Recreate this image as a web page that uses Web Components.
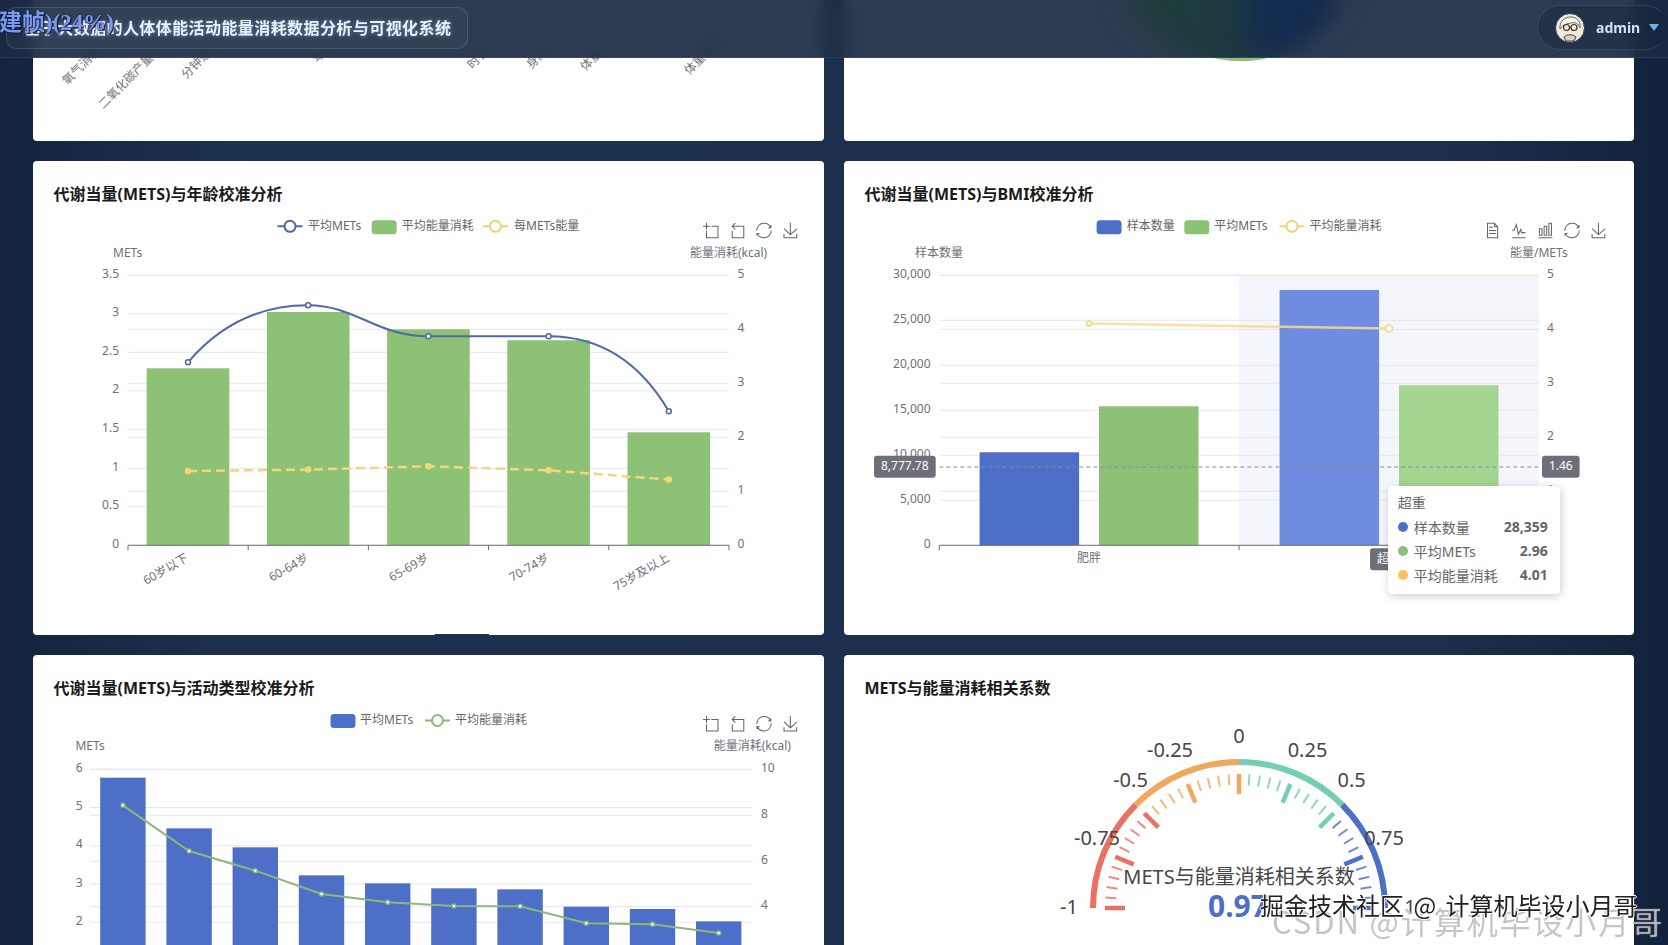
<!DOCTYPE html>
<html lang="zh-CN">
<head>
<meta charset="utf-8">
<title>人体体能活动能量消耗数据分析与可视化系统</title>
<style>
  html, body { margin: 0; height: 100%; overflow: hidden; }
  body {
    background: linear-gradient(90deg, #13243c 0, #1c3050 14%, #1c2f4c 86%, #12223a 100%);
    font-family: "Noto Sans", "Noto Sans CJK SC", sans-serif;
  }
</style>
</head>
<body>
<dash-header></dash-header>
<dash-grid>
  <chart-card><top-bars-chart></top-bars-chart></chart-card>
  <chart-card><top-pie-chart></top-pie-chart></chart-card>
  <chart-card heading="代谢当量(METS)与年龄校准分析"><age-chart></age-chart></chart-card>
  <chart-card heading="代谢当量(METS)与BMI校准分析">
    <bmi-chart></bmi-chart>
    <chart-tooltip heading="超重" style="left:543.7px;top:325px">
      <tip-row color="#4d6fc7" name="样本数量" value="28,359"></tip-row>
      <tip-row color="#8fbf78" name="平均METs" value="2.96"></tip-row>
      <tip-row color="#fcc35c" name="平均能量消耗" value="4.01"></tip-row>
    </chart-tooltip>
  </chart-card>
  <chart-card heading="代谢当量(METS)与活动类型校准分析"><activity-chart></activity-chart></chart-card>
  <chart-card heading="METS与能量消耗相关系数"><gauge-chart></gauge-chart></chart-card>
</dash-grid>
<overlay-text class="progress">建帧)(24%)</overlay-text>
<overlay-text class="csdn">CSDN @计算机毕设小月哥</overlay-text>
<overlay-text class="juejin">掘金技术社区 @ 计算机毕设小月哥</overlay-text>

<script>
const FONT = `"Noto Sans", "Noto Sans CJK SC", sans-serif`;
const BLUE = "#4d6fc7", GREEN = "#8cc176", AXIS = "#6e7079", GRID = "#e3e7ef";

// echarts toolbox glyphs, 60x60 box
const ICONS = {
  zoom: "M0,13.5h26.9 M13.5,26.9V0 M32.1,13.5H58V58H13.5 V32.1",
  back: "M22,1.4L9.9,13.5l12.3,12.3 M10.3,13.5H54.9v44.6 H10.3v-26",
  restore: "M47,18.9h9.8V8.7 M56.3,20.1 C52.1,9,40.5,0.6,26.8,2.1C12.6,3.7,1.6,16.2,2.1,30.6 M13,41.1H3.1v10.2 M3.7,39.9c4.2,11.1,15.8,19.5,29.5,18 c14.2-1.6,25.2-14.1,24.7-28.5",
  save: "M4.7,22.9L29.3,45.5L54.7,23.4M4.6,43.6L4.6,58L53.8,58L53.8,43.6M29.2,45.1L29.2,0",
  data: "M17.5,17.3H33 M45.4,29.5h-28 M11.5,2v56H51V14.8L38.4,2H11.5z M38.4,2.2v12.7H51 M45.4,41.7h-28",
  line: "M4.1,28.9h7.1l9.3-22l7.4,38l9.7-19.7l3,12.8h14.9M4.1,58h51.4",
  bar: "M6.7,22.9h10V48h-10V22.9zM24.9,13h10v35h-10V13zM43.2,2h10v46h-10V2zM3.1,58h53.7"
};

const text = (x, y, s, o = {}) =>
  `<text x="${x}" y="${y}" dominant-baseline="central" text-anchor="${o.a || "start"}" font-size="${o.size || 12}" fill="${o.fill || AXIS}" font-weight="${o.w || 400}"${o.t ? ` transform="${o.t}"` : ""}>${s}</text>`;

const toolbox = (names, x, y) => names.map((n, i) =>
  `<svg x="${x + i * 26.6}" y="${y}" width="15.5" height="15.5" viewBox="0 0 60 60" overflow="visible"><path d="${ICONS[n]}" fill="none" stroke="#666" stroke-width="4"/></svg>`).join("");

const legRect = (x, y, color) => `<rect x="${x}" y="${y - 7}" width="25" height="14" rx="3.5" fill="${color}"/>`;
const legLine = (x, y, color) =>
  `<path d="M${x} ${y}h25" stroke="${color}" stroke-width="2"/><circle cx="${x + 12.5}" cy="${y}" r="5.5" fill="#fff" stroke="${color}" stroke-width="2"/>`;

const hgrid = (ys, x1, x2) => ys.map(y => `<path d="M${x1} ${y}H${x2}" stroke="${GRID}" stroke-width="1"/>`).join("");
const dot = (x, y, c, r = 2.5, fill = "#fff") => `<circle cx="${x}" cy="${y}" r="${r}" fill="${fill}" stroke="${c}" stroke-width="1.5"/>`;

class ChartBase extends HTMLElement {
  static box = [0, 0, 790, 430];
  connectedCallback() {
    const [x, y, w, h] = this.constructor.box;
    this.attachShadow({ mode: "open" }).innerHTML = `
      <style>
        :host { display: block; height: ${h}px; }
        .plot { display: block; width: ${w}px; height: ${h}px; }
        text { font-family: ${FONT}; }
      </style>
      <svg class="plot" viewBox="${x} ${y} ${w} ${h}" xmlns="http://www.w3.org/2000/svg">${this.draw()}</svg>`;
  }
}

class AgeChart extends ChartBase {
  static box = [33, 203.7, 791, 431];
  draw() {
    const L = 128, R = 729, B = 545;
    const cx = [188, 308.2, 428.4, 548.6, 668.8];
    const tops = [368, 311.7, 329, 340, 432];
    const left = [[3.5, 275], [3, 313.6], [2.5, 352], [2, 390.6], [1.5, 429], [1, 468], [0.5, 506.5], [0, 545]];
    const right = [[5, 275], [4, 329], [3, 383], [2, 437], [1, 491], [0, 545]];
    const cats = ["60岁以下", "60-64岁", "65-69岁", "70-74岁", "75岁及以上"];
    const yellow = [470.7, 469.3, 466, 470, 479.3];
    const mets = [362, 305, 336, 336, 411];
    return `
      ${legLine(277.5, 226, "#4f6aa6")}${text(308, 225, "平均METs", { fill: "#666" })}
      ${legRect(371.7, 227, GREEN)}${text(401.7, 225, "平均能量消耗", { fill: "#666" })}
      ${legLine(483, 226, "#f0d27a")}${text(514, 225, "每METs能量", { fill: "#666" })}
      ${toolbox(["zoom", "back", "restore", "save"], 703, 222.5)}
      ${text(113, 252, "METs")}${text(690, 252, "能量消耗(kcal)")}
      ${hgrid(left.map(a => a[1]).concat(right.map(a => a[1])), L, R)}
      ${left.map(a => text(119, a[1] - 2, a[0], { a: "end" })).join("")}
      ${right.map(a => text(737.5, a[1] - 2, a[0])).join("")}
      ${cx.map((c, i) => `<rect x="${c - 41.3}" y="${tops[i]}" width="82.6" height="${B - tops[i]}" fill="${GREEN}"/>`).join("")}
      <path d="M${L} ${B}H${R}" stroke="${AXIS}"/>
      ${[0, 1, 2, 3, 4, 5].map(i => `<path d="M${L + i * 120.2} ${B}v5" stroke="${AXIS}"/>`).join("")}
      ${cx.map((c, i) => text(c - 1, 556, cats[i], { a: "end", t: `rotate(-30 ${c - 1} 556)` })).join("")}
      <path d="M188 362C222 322 262 305 308.2 305C356 305 376 336 428.4 336L548.6 336C600 336 640 362 668.8 411" fill="none" stroke="#4f6aa6" stroke-width="2"/>
      ${cx.map((c, i) => dot(c, mets[i], "#4f6aa6")).join("")}
      <polyline points="${cx.map((c, i) => c + "," + yellow[i]).join(" ")}" fill="none" stroke="#f3d67f" stroke-width="2.5" stroke-dasharray="9 5"/>
      ${cx.map((c, i) => dot(c, yellow[i], "#f7d67a", 2.5, "#fbd46a")).join("")}
      <rect x="434.6" y="633.7" width="54.4" height="1" fill="#22324a"/>`;
  }
}

class BmiChart extends ChartBase {
  static box = [844, 203.7, 790, 431];
  draw() {
    const L = 939.3, R = 1538.8, B = 545;
    const left = [["30,000", 275], ["25,000", 320], ["20,000", 365], ["15,000", 410], ["10,000", 455], ["5,000", 500], ["0", 545]];
    const right = [[5, 275], [4, 329], [3, 383], [2, 437], [1, 491]];
    const pill = (x, y, w, s, c) => `<rect x="${x}" y="${y}" width="${w}" height="22" rx="3" fill="${AXIS}"/>` + text(c, y + 10, s, { a: "middle", fill: "#fff" });
    const bar = (x, top, c) => `<rect x="${x}" y="${top}" width="99.5" height="${B - top}" fill="${c}"/>`;
    return `
      ${legRect(1096.6, 227, BLUE)}${text(1126.7, 225, "样本数量", { fill: "#666" })}
      ${legRect(1184.3, 227, GREEN)}${text(1214.3, 225, "平均METs", { fill: "#666" })}
      ${legLine(1279.5, 226, "#f0d27a")}${text(1309.4, 225, "平均能量消耗", { fill: "#666" })}
      ${toolbox(["data", "line", "bar", "restore", "save"], 1484.5, 222.5)}
      ${text(915, 252, "样本数量")}${text(1510, 252, "能量/METs")}
      <rect x="1239" y="275" width="${R - 1239}" height="270" fill="#f4f6fb"/>
      ${hgrid(left.map(a => a[1]).concat(right.map(a => a[1])), L, R)}
      ${left.map(a => text(930.6, a[1] - 2, a[0], { a: "end" })).join("")}
      ${right.map(a => text(1547, a[1] - 2, a[0])).join("")}
      ${bar(979.6, 452, BLUE)}${bar(1099, 406, GREEN)}${bar(1279.6, 289.7, "#6e8de0")}${bar(1399, 385, "#a3d590")}
      <path d="M${L} ${B}H${R}" stroke="${AXIS}"/>
      ${[0, 1, 2].map(i => `<path d="M${L + i * 299.75} ${B}v5" stroke="${AXIS}"/>`).join("")}
      ${text(1089, 557, "肥胖", { a: "middle" })}
      ${pill(1370, 548, 38, "超重", 1389)}
      <path d="M1089 323.3L1389 328.3" stroke="#f7dc8e" stroke-width="2.5" opacity=".85"/>
      ${dot(1089, 323.3, "#f3d67f", 2.5)}${dot(1389, 328.3, "#f3d67f", 3.5)}
      <path d="M${L} 466.7H${R}" stroke="#8a8c94" stroke-dasharray="4 3"/>
      ${pill(874, 455.5, 61.7, "8,777.78", 904.8)}
      ${pill(1542, 455.5, 37.6, "1.46", 1560.8)}`;
  }
}

class ActivityChart extends ChartBase {
  static box = [33, 698, 791, 431];
  draw() {
    const L = 90, R = 752, B = 1000;
    const cx = Array.from({ length: 10 }, (_, i) => 122.9 + i * 66.2);
    const tops = [383, 535, 592, 676, 700, 715, 718, 770, 777, 814].map(p => 650 + p / 3);
    const line = [466, 603, 662, 732, 757, 768, 769, 820, 823, 849].map(p => 650 + p / 3);
    const left = [[6, 769.3], [5, 807.5], [4, 845.8], [3, 884], [2, 922.3]];
    const right = [[10, 769.3], [8, 815.3], [6, 861.3], [4, 906.7]];
    return `
      ${legRect(330.5, 721, BLUE)}${text(360, 719.5, "平均METs", { fill: "#666" })}
      ${legLine(425, 720.5, "#8db87a")}${text(455, 719.5, "平均能量消耗", { fill: "#666" })}
      ${toolbox(["zoom", "back", "restore", "save"], 703, 716)}
      ${text(75.4, 745.7, "METs")}${text(713.7, 745.7, "能量消耗(kcal)")}
      ${hgrid(left.map(a => a[1]).concat(right.map(a => a[1])), L, R)}
      ${left.map(a => text(82.5, a[1] - 2, a[0], { a: "end" })).join("")}
      ${right.map(a => text(761, a[1] - 2, a[0])).join("")}
      ${cx.map((c, i) => `<rect x="${c - 22.7}" y="${tops[i]}" width="45.4" height="${B - tops[i]}" fill="${BLUE}"/>`).join("")}
      <polyline points="${cx.map((c, i) => c + "," + line[i]).join(" ")}" fill="none" stroke="#8db87a" stroke-width="2"/>
      ${cx.map((c, i) => dot(c, line[i], "#8db87a", 2)).join("")}`;
  }
}

class GaugeChart extends ChartBase {
  static box = [844, 698, 790, 431];
  draw() {
    const cx = 1239, cy = 908, R = 146;
    const pt = (deg, r) => [cx + r * Math.cos(deg * Math.PI / 180), cy - r * Math.sin(deg * Math.PI / 180)];
    const colors = ["#ec6f63", "#efa95f", "#75cdb3", BLUE];
    const arcs = colors.map((c, i) => {
      const [x1, y1] = pt(180 - i * 45, R), [x2, y2] = pt(135 - i * 45, R);
      return `<path d="M${x1} ${y1}A${R} ${R} 0 0 1 ${x2} ${y2}" fill="none" stroke="${c}" stroke-width="6"/>`;
    }).join("");
    let ticks = "";
    for (let i = 0; i <= 40; i++) {
      const major = i % 5 === 0, deg = 180 - i * 4.5;
      const c = colors[Math.min(3, Math.floor((i - (major && i % 10 === 0 && i ? 1 : 0)) / 10))];
      const [x1, y1] = pt(deg, 134), [x2, y2] = pt(deg, major ? 114 : 123);
      ticks += `<path d="M${x1} ${y1}L${x2} ${y2}" stroke="${c}" stroke-width="${major ? 4.5 : 2}" opacity="${major ? 1 : .8}"/>`;
    }
    const labels = [[1069, 906, "-1"], [1097, 837, "-0.75"], [1130.5, 779, "-0.5"], [1170, 749.7, "-0.25"], [1239, 735.7, "0"],
      [1307.5, 749.7, "0.25"], [1351.6, 779, "0.5"], [1384, 837, "0.75"], [1410, 906, "1"]];
    return `
      ${arcs}${ticks}
      ${labels.map(l => text(l[0], l[1], l[2], { a: "middle", size: 20, fill: "#464646" })).join("")}
      ${text(1239, 876.5, "METS与能量消耗相关系数", { a: "middle", size: 20, fill: "#464646" })}
      ${text(1238, 905, "0.97", { a: "middle", size: 30, w: 700, fill: BLUE })}`;
  }
}

// first row: only the bottom of these two charts is left below the header
class TopBarsChart extends ChartBase {
  static box = [33, -290.3, 791, 431];
  draw() {
    const labels = [[64, 82, "氧气消耗量"], [100, 106, "二氧化碳产量"], [183, 76, "分钟通气量"], [314, 60, "年龄"],
      [469, 66, "时长"], [528, 66, "身高"], [582, 68, "体重"], [686, 72, "体重指数"]];
    return labels.map(l => text(l[0], l[1], l[2], { t: `rotate(-45 ${l[0]} ${l[1]})`, fill: "#777" })).join("");
  }
}

class TopPieChart extends ChartBase {
  static box = [844, -290.3, 790, 431];
  draw() {
    return `<circle cx="1241" cy="-49" r="110" fill="${GREEN}"/>`;
  }
}

class ChartCard extends HTMLElement {
  connectedCallback() {
    const heading = this.getAttribute("heading") || "";
    this.attachShadow({ mode: "open" }).innerHTML = `
      <style>
        :host { display: block; position: relative; height: 474px; background: #fff; border-radius: 4px; overflow: hidden; }
        h3 { margin: 0; height: 43px; padding: 23px 0 0 20.5px; box-sizing: border-box; font: 700 16px/20px ${FONT}; color: #1a1a1a; }
      </style>
      <h3>${heading}</h3>
      <slot></slot>`;
  }
}

class TipRow extends HTMLElement {
  connectedCallback() {
    this.attachShadow({ mode: "open" }).innerHTML = `
      <style>
        :host { display: flex; align-items: center; height: 24px; font: 14px ${FONT}; color: #666; }
        i { width: 10px; height: 10px; border-radius: 50%; margin-right: 6px; background: ${this.getAttribute("color")}; }
        b { margin-left: auto; font-weight: 700; }
      </style>
      <i></i><span>${this.getAttribute("name")}</span><b>${this.getAttribute("value")}</b>`;
  }
}

class ChartTooltip extends HTMLElement {
  connectedCallback() {
    this.attachShadow({ mode: "open" }).innerHTML = `
      <style>
        :host { position: absolute; box-sizing: border-box; width: 172px; height: 108px; padding: 6px 12px 0 10px;
          background: #fff; border-radius: 4px; box-shadow: 1px 2px 10px rgba(0,0,0,.2); }
        div { font: 14px/22px ${FONT}; color: #666; margin-bottom: 1px; }
      </style>
      <div>${this.getAttribute("heading")}</div>
      <slot></slot>`;
  }
}

class DashGrid extends HTMLElement {
  connectedCallback() {
    this.attachShadow({ mode: "open" }).innerHTML = `
      <style>
        :host { display: grid; grid-template-columns: 791px 790px; gap: 20px; padding-left: 33px; margin-top: -333.3px; }
      </style>
      <slot></slot>`;
  }
}

class UserChip extends HTMLElement {
  connectedCallback() {
    this.attachShadow({ mode: "open" }).innerHTML = `
      <style>
        :host { display: flex; align-items: center; box-sizing: border-box; width: 131px; height: 45px; margin-top: 5px;
          padding-left: 17px; border: 1px solid rgba(120,150,190,.22); border-right-color: transparent; border-radius: 23px;
          background: rgba(20,34,56,.35); font: 700 14px ${FONT}; color: #cfe1f5; }
        svg { width: 30px; height: 30px; flex: none; }
        span { margin-left: 11px; }
        i { width: 0; height: 0; margin-left: 9px; border: 5px solid transparent; border-top: 7px solid #6db1f0; border-bottom: 0; }
      </style>
      <svg viewBox="0 0 30 30">
        <circle cx="15" cy="15" r="14.5" fill="#efe9dc" stroke="#22344f" stroke-width="1"/>
        <path d="M5 16C4 8 10 4 16 4C22 4 26 9 25 15C23 10 20 9 16 10C12 11 8 11 5 16Z" fill="#f7f4ec" stroke="#6b6a66" stroke-width="1"/>
        <circle cx="11.5" cy="14.5" r="3" fill="none" stroke="#333" stroke-width="1.2"/>
        <circle cx="19" cy="14.5" r="3" fill="none" stroke="#333" stroke-width="1.2"/>
        <path d="M14.5 14.5h1.5M9 24c3-3 9-3 12 0l-2 4h-8z" stroke="#444" stroke-width="1" fill="#d8d2c2"/>
      </svg>
      <span>admin</span><i></i>`;
  }
}

class DashHeader extends HTMLElement {
  connectedCallback() {
    this.attachShadow({ mode: "open" }).innerHTML = `
      <style>
        :host { position: fixed; z-index: 5; top: 0; left: 0; right: 0; height: 58px; box-sizing: border-box; overflow: hidden;
          display: flex; justify-content: space-between; align-items: flex-start; padding-left: 6.4px;
          background: rgba(26,42,66,.92); backdrop-filter: blur(10px); border-bottom: 1px solid rgba(255,255,255,.08); }
        .blob { position: absolute; left: 1125px; top: -110px; width: 216px; height: 170px; border-radius: 50%; filter: blur(14px);
          background: linear-gradient(90deg, #1f3d3a 0, #1e3a3e 45%, #122a52 70%, #142c50 100%); }
        .brand { position: relative; box-sizing: border-box; width: 462px; height: 42px; margin-top: 7px; padding-left: 17px;
          border: 1px solid rgba(120,150,190,.28); border-radius: 10px; background: rgba(255,255,255,.03);
          font: 700 16px/41px ${FONT}; letter-spacing: .42px; color: #e8f1fb; text-shadow: 0 0 4px rgba(160,200,240,.5); }
        user-chip { position: relative; }
      </style>
      <div class="blob"></div>
      <div class="brand">基于大数据的人体体能活动能量消耗数据分析与可视化系统</div>
      <user-chip></user-chip>`;
  }
}

class OverlayText extends HTMLElement {
  connectedCallback() {
    this.attachShadow({ mode: "open" }).innerHTML = `
      <style>
        :host { position: fixed; z-index: 9; white-space: nowrap; }
        :host(.progress) { left: -1px; top: 8px; font: 700 23px/30px "Liberation Serif", "Noto Sans CJK SC", serif;
          color: #7b98ee; text-shadow: 0 0 2px #0c1a38, 1px 1px 1px #0c1a38; }
        :host(.juejin) { left: 1260px; top: 888px; font: 24px/34px "Noto Sans CJK SC", sans-serif; word-spacing: 4px; color: #222;
          text-shadow: -1px 0 #fff, 1px 0 #fff, 0 -1px #fff, 0 1px #fff; }
        :host(.csdn) { left: 1272px; top: 901px; font: 31px/40px "Noto Sans CJK SC", sans-serif; letter-spacing: 1.9px;
          color: rgba(140,140,140,.5); text-shadow: 0 0 1px rgba(255,255,255,.9); }
      </style>
      <slot></slot>`;
  }
}

customElements.define("chart-card", ChartCard);
customElements.define("tip-row", TipRow);
customElements.define("chart-tooltip", ChartTooltip);
customElements.define("dash-grid", DashGrid);
customElements.define("user-chip", UserChip);
customElements.define("dash-header", DashHeader);
customElements.define("overlay-text", OverlayText);
customElements.define("age-chart", AgeChart);
customElements.define("bmi-chart", BmiChart);
customElements.define("activity-chart", ActivityChart);
customElements.define("gauge-chart", GaugeChart);
customElements.define("top-bars-chart", TopBarsChart);
customElements.define("top-pie-chart", TopPieChart);
</script>
</body>
</html>
